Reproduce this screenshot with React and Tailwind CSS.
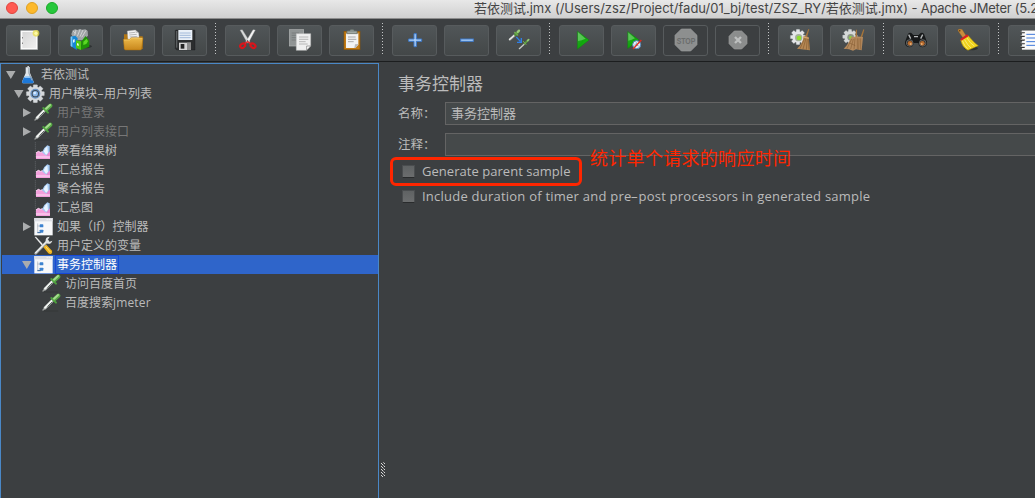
import React from "react";

/* ---------- toolbar drawings: viewBox is 3 units per pixel ---------- */

const Gear = ({ cx, cy, r, fill = "#e4e6e8", stroke = "#9aa0a4" }) => (
  <g>
    {[0, 45, 90, 135].map((a) => (
      <rect key={a} x={cx - r * 0.24} y={cy - r} width={r * 0.48} height={r * 2} rx="2" fill={fill} stroke={stroke} strokeWidth="1" transform={`rotate(${a} ${cx} ${cy})`} />
    ))}
    <circle cx={cx} cy={cy} r={r * 0.76} fill={fill} />
  </g>
);

const NewFile = () => (
  <g>
    <rect x="43" y="16" width="53" height="59" fill="#8b8f91" />
    <rect x="44" y="17" width="50" height="56" fill="#fbfbfb" />
    <rect x="49" y="21" width="41" height="48" fill="url(#page)" />
    <rect x="48" y="37" width="3" height="3" fill="#555" />
    <rect x="48" y="53" width="3" height="3" fill="#555" />
    <circle cx="90" cy="25" r="10" fill="#e9df4a" opacity=".75" />
    <circle cx="90" cy="25" r="5" fill="#fdf9a5" />
  </g>
);

const Templates = () => (
  <g>
    <ellipse cx="80" cy="64" rx="22" ry="6" fill="#2e3233" />
    <path d="M40 28l4-12 8-3 6 2 8-3 6 2 10-1 7 5 1 14-15 14H50z" fill="#a0a4a6" />
    <path d="M46 18l6 8M54 15l-4 16M66 14l-8 20M75 15l-9 20M84 16l-13 21" stroke="#dcdcdc" strokeWidth="2.5" />
    <path d="M38 35l14-3 7 8-3 35-18-12z" fill="#1587d6" />
    <path d="M38 35l5-1v32l-5-3z" fill="#7cc6f8" />
    <path d="M45 44l5-2v9l-5 2z" fill="#e4f5ff" />
    <path d="M54 46l16 3-1 26-15-6z" fill="#4fca14" />
    <path d="M70 49l13-16 11 14v18l-25 10z" fill="#1f9208" />
    <path d="M76 50l10-9 4 8-5 8-9 3z" fill="#5bd823" />
    <path d="M57 54l5 2v7l-5-2z" fill="#f1ffe8" />
  </g>
);

const OpenFolder = () => (
  <g>
    <path d="M42 28h14l4 6h38v38H42z" fill="#b17614" />
    <path d="M52 18l24-3 10 9 2 22H54z" fill="#f3f3f3" stroke="#aaa" />
    <path d="M57 24l18-2M58 30l22-2M59 36l23-2" stroke="#999" strokeWidth="2" />
    <path d="M76 15l1 9 9 0z" fill="#c8c8c8" />
    <path d="M40 43h18l6-5h35l-4 34q-1 3-4 3H47q-3 0-4-3z" fill="url(#folder)" stroke="#a86e0c" strokeWidth="1.5" />
    <path d="M42 45h17l6-5h31" stroke="#f8d67b" strokeWidth="1.5" fill="none" />
  </g>
);

const Save = () => (
  <g>
    <path d="M40 17q0-2 2-2h55q2 0 2 2v58H44l-4-4z" fill="#2b2d2e" stroke="#151617" />
    <rect x="42" y="18" width="4" height="50" fill="#5b5e60" />
    <rect x="49" y="15" width="42" height="30" fill="#e9f0f8" />
    <path d="M53 24h33M53 31h33M53 38h33" stroke="#7f9fca" strokeWidth="2" />
    <rect x="51" y="53" width="36" height="22" fill="#d4d4d4" />
    <rect x="56" y="57" width="11" height="14" fill="#242424" />
    <rect x="75" y="53" width="12" height="22" fill="#8b8b8b" />
  </g>
);

const Cut = () => (
  <g>
    <path d="M45 15l7-1 23 37-8 3z" fill="#d9dbdb" stroke="#8f9392" />
    <path d="M91 15l-7-1-22 37 8 3z" fill="#f3f3f3" stroke="#9b9f9e" />
    <ellipse cx="53" cy="62" rx="8" ry="6" fill="none" stroke="#d9141b" strokeWidth="6.5" transform="rotate(-35 53 62)" />
    <ellipse cx="84" cy="62" rx="8" ry="6" fill="none" stroke="#d9141b" strokeWidth="6.5" transform="rotate(35 84 62)" />
    <path d="M60 55l8-5 8 5" stroke="#e32a2d" strokeWidth="5" fill="none" />
    <circle cx="68" cy="47" r="2" fill="#555" />
  </g>
);

const Copy = () => (
  <g>
    <rect x="37" y="14" width="43" height="49" fill="#909494" stroke="#b0b3b3" strokeWidth="2" />
    <path d="M44 24h22M44 31h14M44 38h14M44 45h14" stroke="#6d7171" strokeWidth="2" />
    <path d="M58 26h43v37L89 76H58z" fill="#efefef" stroke="#c1c3c3" strokeWidth="1.5" />
    <path d="M66 36h28M66 43h28M66 50h20M66 57h26" stroke="#9b9b9b" strokeWidth="2" />
    <path d="M101 63H89v13z" fill="#fff" stroke="#777" strokeWidth="2" />
  </g>
);

const Paste = () => (
  <g>
    <rect x="45" y="19" width="48" height="55" fill="#c27a14" stroke="#8a5408" strokeWidth="2" />
    <path d="M51 25h37v34l-9 10H51z" fill="#f2f2f2" />
    <path d="M57 36h23M57 43h25M57 50h17" stroke="#9a9a9a" strokeWidth="2.5" />
    <path d="M88 57l-10 1-2 11 4 0z" fill="#b9b9b9" />
    <path d="M53 26v-6q0-3 5-3h4q2-4 7-4t7 4h4q5 0 5 3v6z" fill="#87908b" stroke="#5d6461" strokeWidth="1.5" />
    <path d="M56 22h26" stroke="#b7bdb9" strokeWidth="2" />
  </g>
);

const Plus = () => (
  <g>
    <path d="M66 26h7v16h16v7H73v16h-7V49H50v-7h16z" fill="#a9cdf6" stroke="#3c78c8" strokeWidth="3" />
  </g>
);

const Minus = () => <rect x="50" y="42" width="38" height="7" fill="#a9cdf6" stroke="#3c78c8" strokeWidth="3" />;

const Toggle = () => (
  <g strokeLinecap="round">
    <path d="M42 44l17-15" stroke="#767c7c" strokeWidth="7" />
    <path d="M41 43l17-15" stroke="#e4e6e4" strokeWidth="5" />
    <path d="M58 29l9-8" stroke="#4e8f36" strokeWidth="8" />
    <path d="M56 22l9 8" stroke="#6fae4d" strokeWidth="4" />
    <path d="M65 21l4-4" stroke="#9acb7c" strokeWidth="7" />
    <path d="M70 71l16-15" stroke="#c7cbc7" strokeWidth="4" />
    <path d="M86 56l9-9" stroke="#5c9a41" strokeWidth="6" />
    <path d="M82 49l8 9" stroke="#72b04f" strokeWidth="3" />
    <path d="M95 47l3-3" stroke="#93c877" strokeWidth="5" />
    <path d="M61 36l12 13M76 39v13H63" stroke="#2f7fe6" strokeWidth="4" fill="none" strokeLinecap="butt" />
  </g>
);

const Play = () => (
  <g>
    <path d="M55 18l35 27-35 28z" fill="url(#play)" stroke="#147a12" strokeWidth="1.5" />
    <path d="M57 22l23 19q-12 6-23 7z" fill="#7ed87c" opacity=".6" />
  </g>
);

const PlayNoPause = () => (
  <g>
    <path d="M50 19l33 25-33 27z" fill="url(#play)" stroke="#147a12" strokeWidth="1.5" />
    <path d="M52 23l20 17q-10 6-20 7z" fill="#7ed87c" opacity=".6" />
    <circle cx="77" cy="59" r="12" fill="#e8eff6" stroke="#4d82b8" strokeWidth="3" />
    <path d="M76 52v8h-6M77 60l6 3" stroke="#7aa4cc" strokeWidth="3" fill="none" />
    <path d="M66 72l25-27" stroke="#e02b1d" strokeWidth="4" />
  </g>
);

const Stop = () => (
  <g>
    <path d="M55 12h28l19 19v28L83 78H55L36 59V31z" fill="#8d8f8f" stroke="#999b9b" strokeWidth="2" />
    <text x="69" y="56" textAnchor="middle" textLength="56" lengthAdjust="spacingAndGlyphs" fontSize="29" fontFamily="Liberation Sans, sans-serif" fontWeight="700" fill="#6b6d6d">
      STOP
    </text>
  </g>
);

const Shutdown = () => (
  <g>
    <path d="M58 18h22l16 16v22L80 72H58L42 56V34z" fill="#8b8d8d" stroke="#9a9c9c" strokeWidth="2" />
    <path d="M60 36l18 18M78 36L60 54" stroke="#bdbfbf" strokeWidth="7" />
  </g>
);

const Clear = () => (
  <g>
    <Gear cx={60} cy={36} r={23} />
    <circle cx="62" cy="38" r="11" fill="#a3b09a" />
    <circle cx="63" cy="39" r="7" fill="#8fdd2d" />
    <path d="M91 12l3 1-7 24-6-1z" fill="#a5743a" />
    <path d="M77 33l15 3 4 40-39-5q17-14 20-38z" fill="#b58754" />
    <path d="M80 40l-14 31M84 40l-9 32M88 40l-3 34M91 40l2 34" stroke="#7b5226" strokeWidth="1.6" />
    <path d="M76 36l16 4" stroke="#d9aa72" strokeWidth="3" />
  </g>
);

const ClearAll = () => (
  <g>
    <Gear cx={60} cy={35} r={22} fill="#d5d8d8" />
    <circle cx="62" cy="37" r="10" fill="#8b9684" />
    <circle cx="62" cy="38" r="5" fill="#8fce3a" />
    <path d="M78 14l3 0 0 22-5-1zM100 13l3 1-7 24-5-1z" fill="#a5743a" />
    <path d="M63 37q18-4 36-1l-4 40-17-3-9 4-12-4-16-2q16-14 22-34z" fill="#b58a5d" />
    <path d="M65 42L50 72M70 42l-8 30M75 40l-3 33M82 40v33M87 40l-1 34M92 40v34M59 54l17 8" stroke="#80572e" strokeWidth="1.6" />
  </g>
);

const Search = () => (
  <g>
    <path d="M45 27q4-6 10-3l6 6h16l6-6q6-3 10 3l9 24q1 15-13 16-11 0-13-13H62q-2 13-13 13-14-1-13-16z" fill="#17191a" />
    <path d="M47 29l6 12M89 29l-6 12M63 35h12" stroke="#b6b9ba" strokeWidth="4" />
    <circle cx="50" cy="54" r="10" fill="#333" stroke="#777b7c" strokeWidth="2" />
    <circle cx="89" cy="54" r="10" fill="#333" stroke="#777b7c" strokeWidth="2" />
    <circle cx="51" cy="55" r="7" fill="#b66a2c" />
    <circle cx="88" cy="55" r="7" fill="#b66a2c" />
    <circle cx="53" cy="57" r="3" fill="#eab17a" />
    <circle cx="86" cy="57" r="3" fill="#eab17a" />
  </g>
);

const Broom = () => (
  <g>
    <ellipse cx="78" cy="70" rx="21" ry="6" fill="#2d3132" />
    <path d="M39 17q-1-4 4-5l8 1 13 20-10 6z" fill="#c88c3d" stroke="#8d5a1d" />
    <circle cx="44" cy="17" r="2.5" fill="#6c4312" />
    <path d="M47 45q4 22 22 31l31-14q-12-8-30-30z" fill="#f0d21c" stroke="#a98e0d" strokeWidth="1.5" />
    <path d="M52 47q6 16 16 24M59 44q8 16 19 25M66 39q9 16 22 24" stroke="#fbf187" strokeWidth="2.5" fill="none" />
    <path d="M46 42l20-14 5 5-22 14z" fill="#d81f26" />
  </g>
);

const Notebook = () => (
  <g>
    <rect x="42" y="17" width="93" height="57" fill="#fafafa" stroke="#c0c0c0" />
    <path d="M55 28h80M55 39h80M55 50h80M55 61h80" stroke="#3f78da" strokeWidth="3" />
    <path d="M38 23h12M38 34h12M38 45h12M38 56h12M38 67h12" stroke="#222" strokeWidth="4" />
    <path d="M38 21h11M38 32h11M38 43h11M38 54h11M38 65h11" stroke="#ddd" strokeWidth="2" />
  </g>
);

/* ---------- tree drawings: 20x19 px box, 3 units per pixel ---------- */

const Flask = () => (
  <g>
    <path d="M26 7h13v17l11 26q1 5-4 5H19q-5 0-4-5l11-26z" fill="#dfe5ea" />
    <path d="M21 37h23l6 14q0 4-4 4H19q-4 0-4-4z" fill="#1d78d8" />
    <path d="M25 34h15l4 5H22z" fill="#8dc3f5" />
    <path d="M34 9h4v16l9 22-4-1-9-21z" fill="#9aa7b2" />
    <path d="M31 3h5v6h-5z" fill="#c9ced2" />
  </g>
);

const GearBlue = () => (
  <g>
    <Gear cx={31} cy={29} r={27} fill="#d6d9dc" stroke="#aeb3b7" />
    <circle cx="31" cy="29" r="13" fill="#3d4852" stroke="#6c94c4" strokeWidth="4" />
    <circle cx="31" cy="29" r="8" fill="#8eb9ea" />
    <circle cx="29" cy="27" r="4" fill="#dcecff" />
  </g>
);

const Pipette = () => (
  <g strokeLinecap="round">
    <path d="M8 54h42" stroke="#313435" strokeWidth="2" />
    <path d="M6 51l7-7" stroke="#9da19f" strokeWidth="4" />
    <path d="M12 45l22-22" stroke="#b4b9b6" strokeWidth="9" />
    <path d="M12 44l21-21" stroke="#f5f7f5" strokeWidth="5" />
    <path d="M20 40l13-13" stroke="#4c5452" strokeWidth="2.5" />
    <path d="M31 15l14 14" stroke="#4ea03f" strokeWidth="6" />
    <path d="M40 19l12-11" stroke="#56a945" strokeWidth="12" />
    <path d="M39 17l12-11" stroke="#a7dc8f" strokeWidth="6" />
  </g>
);

const Chart = () => (
  <g>
    <path d="M7 4v48" stroke="#777b7d" strokeWidth="2" strokeDasharray="3 3" />
    <path d="M9 36l7-5 6 3 7-2 9 6 13 8v8H9z" fill="#f3a0dc" />
    <path d="M9 36l7-5 6 3 7-2" stroke="#ffd8f3" strokeWidth="3" fill="none" />
    <path d="M27 34l7-13 9-8 7 3v32l-14-7z" fill="#a3c9f3" />
    <path d="M32 31l5-9 6-6 2 21-6 4z" fill="#eaf5ff" />
    <path d="M45 37l6-6v19l-11-5z" fill="#e88bd2" />
    <path d="M9 48h42" stroke="#fbd0f0" strokeWidth="4" />
  </g>
);

const Controller = () => (
  <g>
    <rect x="4" y="3" width="55" height="52" fill="#f7f8fa" />
    <rect x="4" y="3" width="55" height="10" fill="#dcdee4" />
    <path d="M41 8h3M47 8h3M53 8h3" stroke="#fff" strokeWidth="3" />
    <path d="M14 20v26h8M14 27h8" stroke="#7b8794" strokeWidth="2" fill="none" strokeDasharray="2 1" />
    <rect x="20" y="22" width="11" height="9" rx="2" fill="#3c82cf" />
    <rect x="20" y="38" width="11" height="9" rx="2" fill="#3c82cf" />
    <path d="M13 47h10" stroke="#35679c" strokeWidth="3" />
  </g>
);

const Tools = () => (
  <g>
    <path d="M5 3l4-1 25 27-4 4z" fill="#e8e8e8" />
    <path d="M34 29l6-3 17 18q2 6-2 9t-9-1L31 34z" fill="#f0b41d" />
    <path d="M38 32l14 16" stroke="#fbe07c" strokeWidth="3" />
    <path d="M44 15L8 52" stroke="#a4a8aa" strokeWidth="8" strokeLinecap="round" />
    <path d="M42 16L8 50" stroke="#eceeee" strokeWidth="4" strokeLinecap="round" />
    <path d="M50 2q-11 0-12 9l0 7 6 5q11 2 14-9l-8 3-6-5z" fill="#dfe2e3" />
  </g>
);

const groups = [
  [NewFile, Templates, OpenFolder, Save],
  [Cut, Copy, Paste],
  [Plus, Minus, Toggle],
  [Play, PlayNoPause, [Stop], [Shutdown]],
  [Clear, ClearAll],
  [Search, Broom],
  [Notebook],
];

/* Hyphen drawn twice as wide as the font's own. */
const WideHyphen = () => <span className="inline-block w-[7px] origin-center scale-x-[1.8] text-center">-</span>;

const tree = [
  [0, "open", Flask, "若依测试"],
  [1, "open", GearBlue, <>用户模块<WideHyphen />用户列表</>],
  [2, "closed", Pipette, "用户登录", "off"],
  [2, "closed", Pipette, "用户列表接口", "off"],
  [2, "", Chart, "察看结果树"],
  [2, "", Chart, "汇总报告"],
  [2, "", Chart, "聚合报告"],
  [2, "", Chart, "汇总图"],
  [2, "closed", Controller, "如果（If）控制器"],
  [2, "", Tools, "用户定义的变量"],
  [2, "open", Controller, "事务控制器", "on"],
  [3, "", Pipette, "访问百度首页"],
  [3, "", Pipette, <>百度搜索<span className="tracking-[0.15px]">jmeter</span></>],
];

const indents = ["pl-[3px]", "pl-[11px]", "pl-[19px]", "pl-[27px]"];

function ToolButton({ item }) {
  const disabled = Array.isArray(item);
  const Drawing = disabled ? item[0] : item;
  return (
    <button
      className={
        "block h-[31px] w-[45px] shrink-0 rounded-[3px] border border-[#575b5d] " +
        (disabled ? "bg-[#3c3f41]" : "bg-linear-to-b from-[#515658] to-[#434748]")
      }
    >
      <svg viewBox="0 0 135 93" className="-m-px block h-[31px] w-[45px]">
        <Drawing />
      </svg>
    </button>
  );
}

function TreeRow({ row }) {
  const [depth, arrow, Drawing, label, state] = row;
  return (
    <div className={"flex h-[19px] items-center " + indents[depth] + (state === "on" ? " bg-[#2f65ca]" : "")}>
      <svg viewBox="0 0 12 19" className="h-[19px] w-3 shrink-0">
        {arrow === "open" && <path d="M1 6h9.5l-4.700 8z" fill="#aaacad" />}
        {arrow === "closed" && <path d="M2 5.300v8.800l8-4.400z" fill="#aaacad" />}
      </svg>
      <svg viewBox="0 0 60 57" className="h-[19px] w-5 shrink-0">
        <Drawing />
      </svg>
      <span
        className={
          "ml-[2px] h-[19px] border px-px leading-[17px] whitespace-nowrap " +
          (state === "on"
            ? "border-[#1748d8] text-white"
            : state === "off"
              ? "border-transparent text-[#777777]"
              : "border-transparent text-[#bbbbbb]")
        }
      >
        {label}
      </span>
    </div>
  );
}

const Check = ({ children, className }) => (
  <label className={"flex items-center whitespace-nowrap text-[13px] " + className}>
    <span className="mr-[7px] h-[13px] w-[13px] shrink-0 border border-[#4a4d4f] border-b-[#292b2c] bg-linear-to-b from-[#5f6263] to-[#6b6d6e]" />
    <span className="block">{children}</span>
  </label>
);

export default function App() {
  return (
    <div className="flex h-[498px] w-[1035px] flex-col overflow-hidden bg-[#3c3f41] font-['Open_Sans','Noto_Sans_CJK_SC',sans-serif] text-xs text-[#bbbbbb]">
      <svg className="absolute h-0 w-0">
        <defs>
          <linearGradient id="page" x1="0" y1="0" x2="1" y2="1">
            <stop offset="0" stopColor="#d6d6d6" />
            <stop offset="1" stopColor="#f0f0f0" />
          </linearGradient>
          <linearGradient id="folder" x1="0" y1="0" x2="0" y2="1">
            <stop offset="0" stopColor="#edba4b" />
            <stop offset="1" stopColor="#c8871c" />
          </linearGradient>
          <linearGradient id="play" x1="0" y1="0" x2="1" y2="1">
            <stop offset="0" stopColor="#3aa83a" />
            <stop offset=".5" stopColor="#0fa60c" />
            <stop offset="1" stopColor="#18c614" />
          </linearGradient>
        </defs>
      </svg>

      <header className="flex h-[19px] shrink-0 items-start border-b border-[#8d8d8d] bg-linear-to-b from-[#e8e8e8] to-[#d0d0d0]">
        <div className="flex w-[474px] shrink-0 gap-2 pt-[2px] pl-[6px]">
          <span className="h-3 w-3 rounded-full border border-[#e0443e] bg-[#ff5a52]" />
          <span className="h-3 w-3 rounded-full border border-[#dea123] bg-[#fdb92c]" />
          <span className="h-3 w-3 rounded-full border border-[#1aab29] bg-[#27c73c]" />
        </div>
        <h1 className="font-['Inter','Noto_Sans_CJK_SC',sans-serif] text-[13px] leading-[17px] whitespace-nowrap text-[#454545]">
          <span className="tracking-[-0.01px]">若依测试.jmx (/Users/zsz/Project/fadu/01_bj/test/ZSZ_RY/若依测试.jmx) </span>
          <span className="tracking-[-0.25px]">- Apache JMeter (5.2</span>
        </h1>
      </header>

      <div className="flex h-[43px] shrink-0 border-b border-[#1c1e1f] pt-[6px] pl-[6px]">
        {groups.map((items, i) => (
          <div key={i} className="flex shrink-0">
            {i > 0 && (
              <div className="-mt-[2px] mr-[9px] ml-2 h-[32px] w-px shrink-0 bg-[repeating-linear-gradient(to_bottom,#c3c5c6_0_1px,transparent_1px_3px)]" />
            )}
            <div className="flex gap-[7px]">
              {items.map((item, j) => (
                <ToolButton key={j} item={item} />
              ))}
            </div>
          </div>
        ))}
      </div>

      <div className="flex min-h-0 flex-1">
        <aside className="mt-px w-[379px] shrink-0 border border-b-0 border-[#4a88c7] pt-px pl-px">
          {tree.map((row, i) => (
            <TreeRow key={i} row={row} />
          ))}
        </aside>

        <div className="flex w-[8px] shrink-0 flex-col pt-[400px] pl-[2px]">
          <svg viewBox="0 0 4 15" className="h-[15px] w-1" shapeRendering="crispEdges">
            {[0, 3, 6, 9, 12].map((y) => (
              <g key={y} fill="#d8d8d8">
                <rect x="0" y={y + 1} width="1" height="1" />
                <rect x="1" y={y + 2} width="1" height="1" />
                <rect x="2" y={y} width="1" height="1" fill="#999" />
                <rect x="3" y={y + 1} width="1" height="1" />
              </g>
            ))}
          </svg>
        </div>

        <main className="flex min-w-0 flex-1 flex-col pt-[9px] pl-[11px]">
          <h2 className="h-[31px] text-[17px] leading-[26px]">事务控制器</h2>
          <div className="flex h-[23px] items-center">
            <span className="w-[47px] shrink-0 pt-px text-[12.5px]">名称：</span>
            <div className="h-[23px] w-[600px] shrink-0 border border-[#646464] bg-[#45494a] pl-[5px] text-[13px] leading-[21px]">事务控制器</div>
          </div>
          <div className="mt-2 flex h-[23px] items-center">
            <span className="w-[47px] shrink-0 pt-px text-[12.5px]">注释：</span>
            <div className="h-[23px] w-[600px] shrink-0 border border-[#646464] bg-[#45494a]" />
          </div>
          <div className="relative flex">
            <div className="-ml-2 mt-px h-[29px] w-[192px] rounded-[6px] border-[3px] border-[#ff2600] pl-[9px]">
              <Check className="h-[23px] tracking-[0.04px]">Generate parent sample</Check>
            </div>
            <p className="absolute top-[-11px] left-[192px] text-[18px] leading-[26px] tracking-[0.3px] whitespace-nowrap text-[#ff2600]">统计单个请求的响应时间</p>
          </div>
          <Check className="mt-[-1px] h-[23px] pl-[4px] tracking-[0.23px]">
            Include duration of timer and pre<WideHyphen />post processors in generated sample
          </Check>
        </main>
      </div>
    </div>
  );
}
